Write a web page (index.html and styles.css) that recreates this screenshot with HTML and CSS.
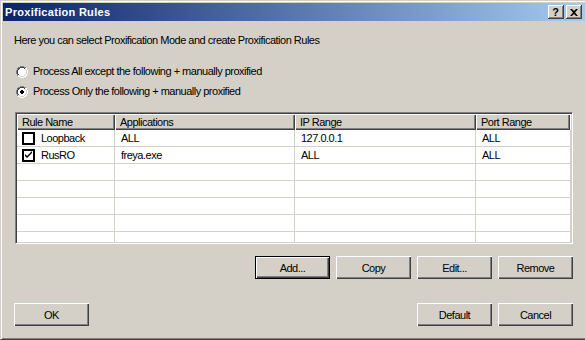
FILE: index.html
```html
<!DOCTYPE html>
<html>
<head>
<meta charset="utf-8">
<title>Proxification Rules</title>
<link rel="stylesheet" href="styles.css">
</head>
<body>
<div class="window">
  <div class="titlebar">
    <span class="title">Proxification Rules</span>
    <div class="tb-buttons">
      <span class="tb-btn help">?</span>
      <span class="tb-btn close">
        <svg width="8" height="7" viewBox="0 0 8 7"><path d="M0 0h2l2 2 2-2h2L5 3.5 8 7H6L4 5 2 7H0l3-3.5z" fill="#000"/></svg>
      </span>
    </div>
  </div>
  <div class="content">
    <div class="intro">Here you can select Proxification Mode and create Proxification Rules</div>
    <div class="radios">
      <div class="radio">
        <svg class="radio-icon" width="12" height="12" viewBox="0 0 12 12">
          <path d="M4 0h4v1h2v1h1v2h1v4h-1v2h-1v1H8v1H4v-1H2v-1H1V8H0V4h1V2h1V1h2z" fill="#fff"/>
          <path d="M4 0h4v1H4zM2 1h2v1H2zM8 1h2v1H8zM1 2h1v2H1zM0 4h1v4H0zM1 8h1v2H1z" fill="#808080"/>
          <path d="M4 1h4v1H4zM2 2h2v1H2zM8 2h1v1H8zM2 3h1v1H2zM1 4h1v4H1zM2 8h1v1H2z" fill="#404040"/>
          <path d="M10 2h1v2h-1zM11 4h1v4h-1zM10 8h1v2h-1zM8 10h2v1H8zM4 11h4v1H4zM2 10h2v1H2z" fill="#fff"/>
          <path d="M9 3h1v1H9zM10 4h1v4h-1zM9 8h1v1H9zM8 9h1v1H8zM4 10h4v1H4zM3 9h1v1H3z" fill="#d4d0c8"/>
        </svg>
        <span>Process All except the following + manually proxified</span>
      </div>
      <div class="radio">
        <svg class="radio-icon" width="12" height="12" viewBox="0 0 12 12">
          <path d="M4 0h4v1h2v1h1v2h1v4h-1v2h-1v1H8v1H4v-1H2v-1H1V8H0V4h1V2h1V1h2z" fill="#fff"/>
          <path d="M4 0h4v1H4zM2 1h2v1H2zM8 1h2v1H8zM1 2h1v2H1zM0 4h1v4H0zM1 8h1v2H1z" fill="#808080"/>
          <path d="M4 1h4v1H4zM2 2h2v1H2zM8 2h1v1H8zM2 3h1v1H2zM1 4h1v4H1zM2 8h1v1H2z" fill="#404040"/>
          <path d="M10 2h1v2h-1zM11 4h1v4h-1zM10 8h1v2h-1zM8 10h2v1H8zM4 11h4v1H4zM2 10h2v1H2z" fill="#fff"/>
          <path d="M9 3h1v1H9zM10 4h1v4h-1zM9 8h1v1H9zM8 9h1v1H8zM4 10h4v1H4zM3 9h1v1H3z" fill="#d4d0c8"/>
          <path d="M5 4h2v1h1v2H7v1H5V7H4V5h1z" fill="#000"/>
        </svg>
        <span>Process Only the following + manually proxified</span>
      </div>
    </div>
    <div class="listview">
      <div class="lv-header">
        <div class="hcell c1">Rule Name</div>
        <div class="hcell c2">Applications</div>
        <div class="hcell c3">IP Range</div>
        <div class="hcell c4">Port Range</div>
      </div>
      <div class="lv-row">
        <div class="cell c1"><span class="check"></span>Loopback</div>
        <div class="cell c2">ALL</div>
        <div class="cell c3">127.0.0.1</div>
        <div class="cell c4">ALL</div>
      </div>
      <div class="lv-row">
        <div class="cell c1"><span class="check"><svg width="9" height="9" viewBox="0 0 9 9"><path d="M1 3l2 2 5-5v2L3 7 1 5z" fill="#000"/></svg></span>RusRO</div>
        <div class="cell c2">freya.exe</div>
        <div class="cell c3">ALL</div>
        <div class="cell c4">ALL</div>
      </div>
      <div class="lv-row"><div class="cell c1"></div><div class="cell c2"></div><div class="cell c3"></div><div class="cell c4"></div></div>
      <div class="lv-row"><div class="cell c1"></div><div class="cell c2"></div><div class="cell c3"></div><div class="cell c4"></div></div>
      <div class="lv-row"><div class="cell c1"></div><div class="cell c2"></div><div class="cell c3"></div><div class="cell c4"></div></div>
      <div class="lv-row"><div class="cell c1"></div><div class="cell c2"></div><div class="cell c3"></div><div class="cell c4"></div></div>
      <div class="lv-row"><div class="cell c1"></div><div class="cell c2"></div><div class="cell c3"></div><div class="cell c4"></div></div>
    </div>
    <div class="btn-row">
      <button class="btn default">Add...</button>
      <button class="btn">Copy</button>
      <button class="btn">Edit...</button>
      <button class="btn">Remove</button>
    </div>
    <div class="footer">
      <button class="btn">OK</button>
      <div class="footer-right">
        <button class="btn">Default</button>
        <button class="btn">Cancel</button>
      </div>
    </div>
  </div>
</div>
</body>
</html>
```

FILE: styles.css
```css
html, body {
  margin: 0;
  padding: 0;
  background: #d4d0c8;
  overflow: hidden;
  width: 585px;
  height: 340px;
}
body {
  font-family: "Liberation Sans", Arial, sans-serif;
  font-size: 11px;
  letter-spacing: -0.5px;
  color: #000;
}
.window {
  width: 589px;
  height: 340px;
  box-sizing: border-box;
  border-top: 1px solid #d4d0c8;
  border-left: 1px solid #d4d0c8;
  border-right: 1px solid #404040;
  border-bottom: 1px solid #404040;
  box-shadow: inset 1px 1px 0 #fff, inset -1px -1px 0 #808080;
  padding: 2px;
  background: #d4d0c8;
  display: flex;
  flex-direction: column;
}
.titlebar {
  height: 18px;
  flex: none;
  background: linear-gradient(to right, #0a246a, #a6caf0);
  display: flex;
  align-items: center;
  justify-content: space-between;
  padding: 0 4px 0 2px;
}
.title {
  color: #fff;
  font-weight: bold;
  font-size: 11px;
  line-height: 13px;
  letter-spacing: 0.3px;
}
.tb-buttons {
  display: flex;
  gap: 2px;
}
.tb-btn {
  width: 16px;
  height: 14px;
  box-sizing: border-box;
  background: #d4d0c8;
  box-shadow: inset -1px -1px 0 #404040, inset 1px 1px 0 #fff, inset -2px -2px 0 #808080;
  display: flex;
  align-items: center;
  justify-content: center;
  font-weight: bold;
  font-size: 11px;
  line-height: 12px;
  letter-spacing: 0;
}
.tb-btn.help {
  padding-right: 1px;
}
.content {
  flex: 1;
  padding: 13px 13px 0 12px;
  display: flex;
  flex-direction: column;
}
.intro {
  line-height: 13px;
  margin-left: -1px;
}
.radios {
  margin-top: 18px;
  display: flex;
  flex-direction: column;
  gap: 7px;
}
.radio {
  display: flex;
  align-items: center;
  line-height: 13px;
  height: 13px;
  padding-left: 1px;
}
.radio-icon {
  flex: none;
  margin-right: 5px;
}
.listview {
  margin-top: 14px;
  height: 132px;
  box-sizing: border-box;
  background: #fff;
  border-top: 1px solid #808080;
  border-left: 1px solid #808080;
  border-right: 1px solid #fff;
  border-bottom: 1px solid #fff;
  box-shadow: inset 1px 1px 0 #404040, inset -1px -1px 0 #d4d0c8;
  padding: 1px;
  overflow: hidden;
}
.lv-header {
  display: flex;
  height: 16px;
}
.hcell {
  box-sizing: border-box;
  height: 16px;
  background: #d4d0c8;
  box-shadow: inset 1px 1px 0 #fff, inset -1px -1px 0 #404040, inset -2px -2px 0 #808080;
  padding: 1px 6px 0 5px;
  line-height: 14px;
  white-space: nowrap;
}
.c1 { width: 98px; flex: none; }
.c2 { width: 180px; flex: none; }
.c3 { width: 181px; flex: none; }
.c4 { width: 94px; flex: none; }
.lv-row {
  display: flex;
  height: 17px;
  box-sizing: border-box;
  border-bottom: 1px solid #d4d0c8;
}
.cell {
  box-sizing: border-box;
  height: 16px;
  line-height: 16px;
  padding-left: 6px;
  border-right: 1px solid #d4d0c8;
  white-space: nowrap;
  display: flex;
  align-items: center;
}
.cell.c1 {
  padding-left: 5px;
}
.cell.c4 {
  width: 95px;
}
.check {
  width: 13px;
  height: 13px;
  box-sizing: border-box;
  border: 2px solid #000;
  background: #fff;
  margin-right: 6px;
  display: flex;
  align-items: center;
  justify-content: center;
  flex: none;
}
.btn-row {
  margin-top: 12px;
  display: flex;
  justify-content: flex-end;
  gap: 6px;
}
.btn {
  width: 75px;
  height: 23px;
  box-sizing: border-box;
  background: #d4d0c8;
  border: none;
  margin: 0;
  padding: 0;
  font-family: "Liberation Sans", Arial, sans-serif;
  font-size: 11px;
  letter-spacing: -0.5px;
  color: #000;
  box-shadow: inset 1px 1px 0 #fff, inset -1px -1px 0 #404040, inset -2px -2px 0 #808080;
}
.btn.default {
  box-shadow: inset 0 0 0 1px #000, inset 2px 2px 0 #fff, inset -2px -2px 0 #404040, inset -3px -3px 0 #808080;
}
.footer {
  margin-top: 24px;
  display: flex;
  justify-content: space-between;
  margin-left: -1px;
}
.footer-right {
  display: flex;
  gap: 6px;
}
```
